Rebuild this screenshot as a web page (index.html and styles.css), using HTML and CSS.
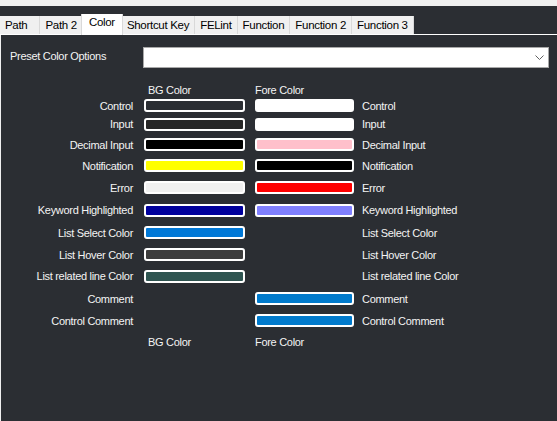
FILE: index.html
```html
<!DOCTYPE html>
<html>
<head>
<meta charset="utf-8">
<link rel="stylesheet" href="styles.css">
</head>
<body>
<div class="topbar"></div>
<div class="tabstrip">
  <div class="tab">Path</div>
  <div class="tab">Path 2</div>
  <div class="tab active">Color</div>
  <div class="tab">Shortcut Key</div>
  <div class="tab">FELint</div>
  <div class="tab">Function</div>
  <div class="tab">Function 2</div>
  <div class="tab">Function 3</div>
</div>
<div class="panel">
  <div class="preset">
    <div class="preset-label">Preset Color Options</div>
    <div class="select">
      <svg class="chev" width="9" height="5" viewBox="0 0 9 5"><polyline points="0.5,0.5 4.5,4.5 8.5,0.5" fill="none" stroke="#606060" stroke-width="1"/></svg>
    </div>
  </div>
  <div class="grid">
    <div></div><div class="head bg">BG Color</div><div class="head">Fore Color</div><div></div>

    <div class="lbl">Control</div><div class="sw c-ctrl"></div><div class="sw c-white"></div><div class="rlbl">Control</div>
    <div class="lbl">Input</div><div class="sw c-input"></div><div class="sw c-white"></div><div class="rlbl">Input</div>
    <div class="lbl">Decimal Input</div><div class="sw c-black"></div><div class="sw c-pink"></div><div class="rlbl">Decimal Input</div>
    <div class="lbl">Notification</div><div class="sw c-yellow"></div><div class="sw c-black"></div><div class="rlbl">Notification</div>
    <div class="lbl">Error</div><div class="sw c-light"></div><div class="sw c-red"></div><div class="rlbl">Error</div>
    <div class="lbl">Keyword Highlighted</div><div class="sw c-navy"></div><div class="sw c-lav"></div><div class="rlbl">Keyword Highlighted</div>
    <div class="lbl">List Select Color</div><div class="sw c-sel"></div><div></div><div class="rlbl">List Select Color</div>
    <div class="lbl">List Hover Color</div><div class="sw c-hover"></div><div></div><div class="rlbl">List Hover Color</div>
    <div class="lbl">List related line Color</div><div class="sw c-teal"></div><div></div><div class="rlbl">List related line Color</div>
    <div class="lbl">Comment</div><div></div><div class="sw c-blue"></div><div class="rlbl">Comment</div>
    <div class="lbl">Control Comment</div><div></div><div class="sw c-blue"></div><div class="rlbl">Control Comment</div>

    <div></div><div class="head bg">BG Color</div><div class="head">Fore Color</div><div></div>
  </div>
</div>
</body>
</html>
```
FILE: styles.css
```css
html, body {
  margin: 0;
  padding: 0;
}
body {
  width: 557px;
  height: 421px;
  overflow: hidden;
  background: #2b2e33;
  font-family: "Liberation Sans", Arial, sans-serif;
  font-size: 11px;
  letter-spacing: -0.3px;
  color: #f4f4f4;
}
.topbar {
  height: 6px;
  background: #f0f0f0;
}
.tabstrip {
  height: 28px;
  display: flex;
  align-items: flex-end;
  border-bottom: 1px solid #ffffff;
  background: #2b2e33;
}
.tab {
  height: 18px;
  line-height: 18px;
  padding: 0 5px;
  background: #f0f0f0;
  color: #000;
  border-right: 1px solid #d9d9d9;
  box-sizing: border-box;
  white-space: nowrap;
  font-size: 11.5px;
}
.tab:first-child {
  padding-left: 5px;
  padding-right: 12px;
}
.tab.active {
  height: 21px;
  line-height: 17px;
  background: #ffffff;
  margin: 0 -1px -1px -2px;
  padding: 0 7px;
  position: relative;
  z-index: 1;
  border-right: 1px solid #d9d9d9;
  border-left: 1px solid #d9d9d9;
}
.panel {
  height: 386px;
  border-left: 1px solid #f0f0f0;
  box-sizing: border-box;
  padding-top: 12px;
}
.preset {
  display: flex;
  align-items: center;
  height: 21px;
}
.preset-label {
  width: 133px;
  padding-left: 9px;
  padding-bottom: 3px;
  box-sizing: border-box;
}
.select {
  margin-left: 9px;
  width: 406px;
  height: 21px;
  background: #ffffff;
  border: 1px solid #a8a8a8;
  box-sizing: border-box;
  display: flex;
  align-items: center;
  justify-content: flex-end;
  padding-right: 4px;
}
.chev {
  display: block;
}
.grid {
  margin-top: 14px;
  display: grid;
  grid-template-columns: 132px 101px 99px auto;
  column-gap: 0;
  grid-template-rows: 15px 17px 20px 21px 21px 23px 22px 23px 21px 22px 23px 21px 21px;
  align-items: center;
}
.grid > :nth-child(4n+2) {
  margin-left: 11px;
}
.grid > :nth-child(4n+3) {
  margin-left: 21px;
}
.grid > :nth-child(4n) {
  margin-left: 29px;
}
.lbl {
  text-align: right;
  white-space: nowrap;
}
.rlbl {
  white-space: nowrap;
}
.head {
  white-space: nowrap;
}
.head.bg {
  padding-left: 4px;
}
.sw {
  width: 101px;
  height: 13px;
  border: 2px solid #ffffff;
  border-radius: 3px;
  box-sizing: border-box;
}
.grid > .sw:nth-child(4n+3) {
  width: 99px;
}
.c-ctrl { background: #2b2e33; }
.c-input { background: #262626; }
.c-black { background: #000000; }
.c-yellow { background: #ffff00; }
.c-light { background: #f0f0f0; }
.c-navy { background: #00009c; }
.c-sel { background: #0078d7; }
.c-hover { background: #3d3d3d; }
.c-teal { background: #2f5551; }
.c-white { background: #ffffff; }
.c-pink { background: #ffc0cb; }
.c-red { background: #ff0000; }
.c-lav { background: #8080ff; }
.c-blue { background: #007acc; }
```
